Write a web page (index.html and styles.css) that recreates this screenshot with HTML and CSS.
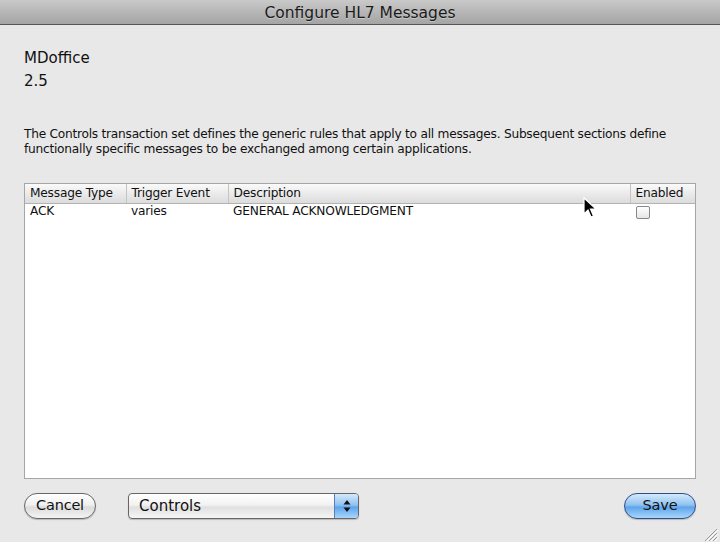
FILE: index.html
```html
<!DOCTYPE html>
<html lang="en">
<head>
  <meta charset="UTF-8" />
  <title>Configure HL7 Messages</title>
  <link rel="stylesheet" href="styles.css">
</head>
<body>
<div class="window">
  <div class="titlebar">Configure HL7 Messages</div>

  <div class="content">
    <div class="app-name">MDoffice</div>
    <div class="version">2.5</div>

    <p class="intro">The Controls transaction set defines the generic rules that apply to all messages. Subsequent sections define functionally specific messages to be exchanged among certain applications.</p>

    <div class="table-box">
      <table class="messages">
        <thead>
        <tr>
          <th class="col-type">Message Type</th>
          <th class="col-trigger">Trigger Event</th>
          <th class="col-desc">Description</th>
          <th class="col-enabled">Enabled</th>
        </tr>
        </thead>
        <tbody>
        <tr>
          <td>ACK</td>
          <td>varies</td>
          <td>GENERAL ACKNOWLEDGMENT</td>
          <td><span class="checkbox"></span></td>
        </tr>
        </tbody>
      </table>
    </div>

    <div class="footer">
      <button class="btn">Cancel</button>
      <div class="popup">
        <span class="popup-label">Controls</span>
        <span class="stepper">
          <svg width="8" height="14" viewBox="0 0 8 14">
            <path d="M4 1 L7.5 5.5 L0.5 5.5 Z" fill="#111"/>
            <path d="M4 13 L7.5 8.5 L0.5 8.5 Z" fill="#111"/>
          </svg>
        </span>
      </div>
      <div class="spacer"></div>
      <button class="btn btn-default">Save</button>
    </div>
  </div>

  <svg class="cursor" width="14" height="22" viewBox="0 0 14 22">
    <path d="M1 1 L1 17 L5 13 L8 20 L10.5 19 L7.5 12 L13 12 Z" fill="#000" stroke="#fff" stroke-width="1.2"/>
  </svg>

  <svg class="grip" width="16" height="14" viewBox="0 0 16 14">
    <path d="M15 2 L3 14 M15 6 L7 14 M15 10 L11 14" stroke="#999" stroke-width="1"/>
    <path d="M16 3 L5 14 M16 7 L9 14 M16 11 L13 14" stroke="#fff" stroke-width="1"/>
  </svg>
</div>
</body>
</html>
```

FILE: styles.css
```css
* {
  box-sizing: border-box;
}
html, body {
  margin: 0;
  padding: 0;
}
body {
  font-family: "DejaVu Sans", "Liberation Sans", sans-serif;
  background: #e8e8e8;
  color: #111;
}

.window {
  position: relative;
  width: 720px;
  height: 542px;
  overflow: hidden;
  background: #e8e8e8;
}

.titlebar {
  height: 25px;
  line-height: 26px;
  text-align: center;
  font-size: 15.5px;
  letter-spacing: 0;
  color: #1a1a1a;
  background: linear-gradient(#c9c9c9, #a4a4a4);
  border-bottom: 1px solid #555;
  text-shadow: 0 1px 0 rgba(255, 255, 255, 0.35);
}

.content {
  padding: 0 24px;
}

.app-name {
  margin-top: 24px;
  font-size: 15px;
  letter-spacing: 0;
  line-height: 18px;
}
.version {
  margin-top: 5px;
  font-size: 15px;
  line-height: 18px;
}

.intro {
  margin: 37px 0 0;
  font-size: 12.2px;
  letter-spacing: -0.25px;
  line-height: 15px;
  width: 645px;
}

.table-box {
  margin-top: 26px;
  width: 672px;
  height: 296px;
  background: #fff;
  border: 1px solid #a6a6a6;
}

.messages {
  width: 100%;
  border-collapse: collapse;
  font-size: 12.2px;
  letter-spacing: -0.2px;
  table-layout: fixed;
}
.messages th {
  height: 19px;
  padding: 0 5px;
  font-weight: normal;
  text-align: left;
  background: linear-gradient(#fafafa, #e9e9e9 55%, #dcdcdc);
  border-bottom: 1px solid #b3b3b3;
  border-right: 1px solid #c4c4c4;
  white-space: nowrap;
}
.messages th:last-child {
  border-right: none;
}
.messages td {
  height: 16px;
  padding: 0 5px;
  white-space: nowrap;
}
.col-type { width: 101px; }
.col-trigger { width: 102px; }
.col-desc { width: 402px; }

.checkbox {
  display: inline-block;
  width: 14px;
  height: 13px;
  margin: 2px 0 0 1px;
  border: 1px solid #888;
  border-radius: 2px;
  background: linear-gradient(#fff, #e6e6e6);
  vertical-align: top;
}

.footer {
  display: flex;
  align-items: center;
  margin-top: 13px;
  height: 27px;
}
.spacer {
  flex: 1;
}

.btn {
  height: 26px;
  width: 72px;
  font-family: inherit;
  font-size: 14.5px;
  letter-spacing: -0.2px;
  color: #111;
  border: 1px solid #666;
  border-radius: 13px;
  background: linear-gradient(#ffffff, #f0f0f0 45%, #dcdcdc 55%, #f4f4f4);
  box-shadow: 0 1px 1px rgba(0, 0, 0, 0.2);
  padding: 0 0 1px;
}
.btn-default {
  border-color: #2e4f86;
  background: linear-gradient(#d3e9fc, #92c3f1 45%, #5ea5ec 55%, #a9d6fb);
}

.popup {
  display: flex;
  align-items: stretch;
  width: 231px;
  height: 26px;
  margin-left: 32px;
  border: 1px solid #666;
  border-radius: 4px;
  overflow: hidden;
  background: linear-gradient(#ffffff, #f2f2f2 45%, #e0e0e0 55%, #f6f6f6);
  box-shadow: 0 1px 1px rgba(0, 0, 0, 0.2);
}
.popup-label {
  flex: 1;
  padding-left: 10px;
  font-size: 15px;
  line-height: 25px;
  letter-spacing: 0;
}
.stepper {
  width: 24px;
  display: flex;
  align-items: center;
  justify-content: center;
  border-left: 1px solid #5a7fb4;
  background: linear-gradient(#d3e9fc, #92c3f1 45%, #5ea5ec 55%, #a9d6fb);
}

.cursor {
  position: absolute;
  left: 583px;
  top: 197px;
}

.grip {
  position: absolute;
  right: 2px;
  bottom: 1px;
}
```
